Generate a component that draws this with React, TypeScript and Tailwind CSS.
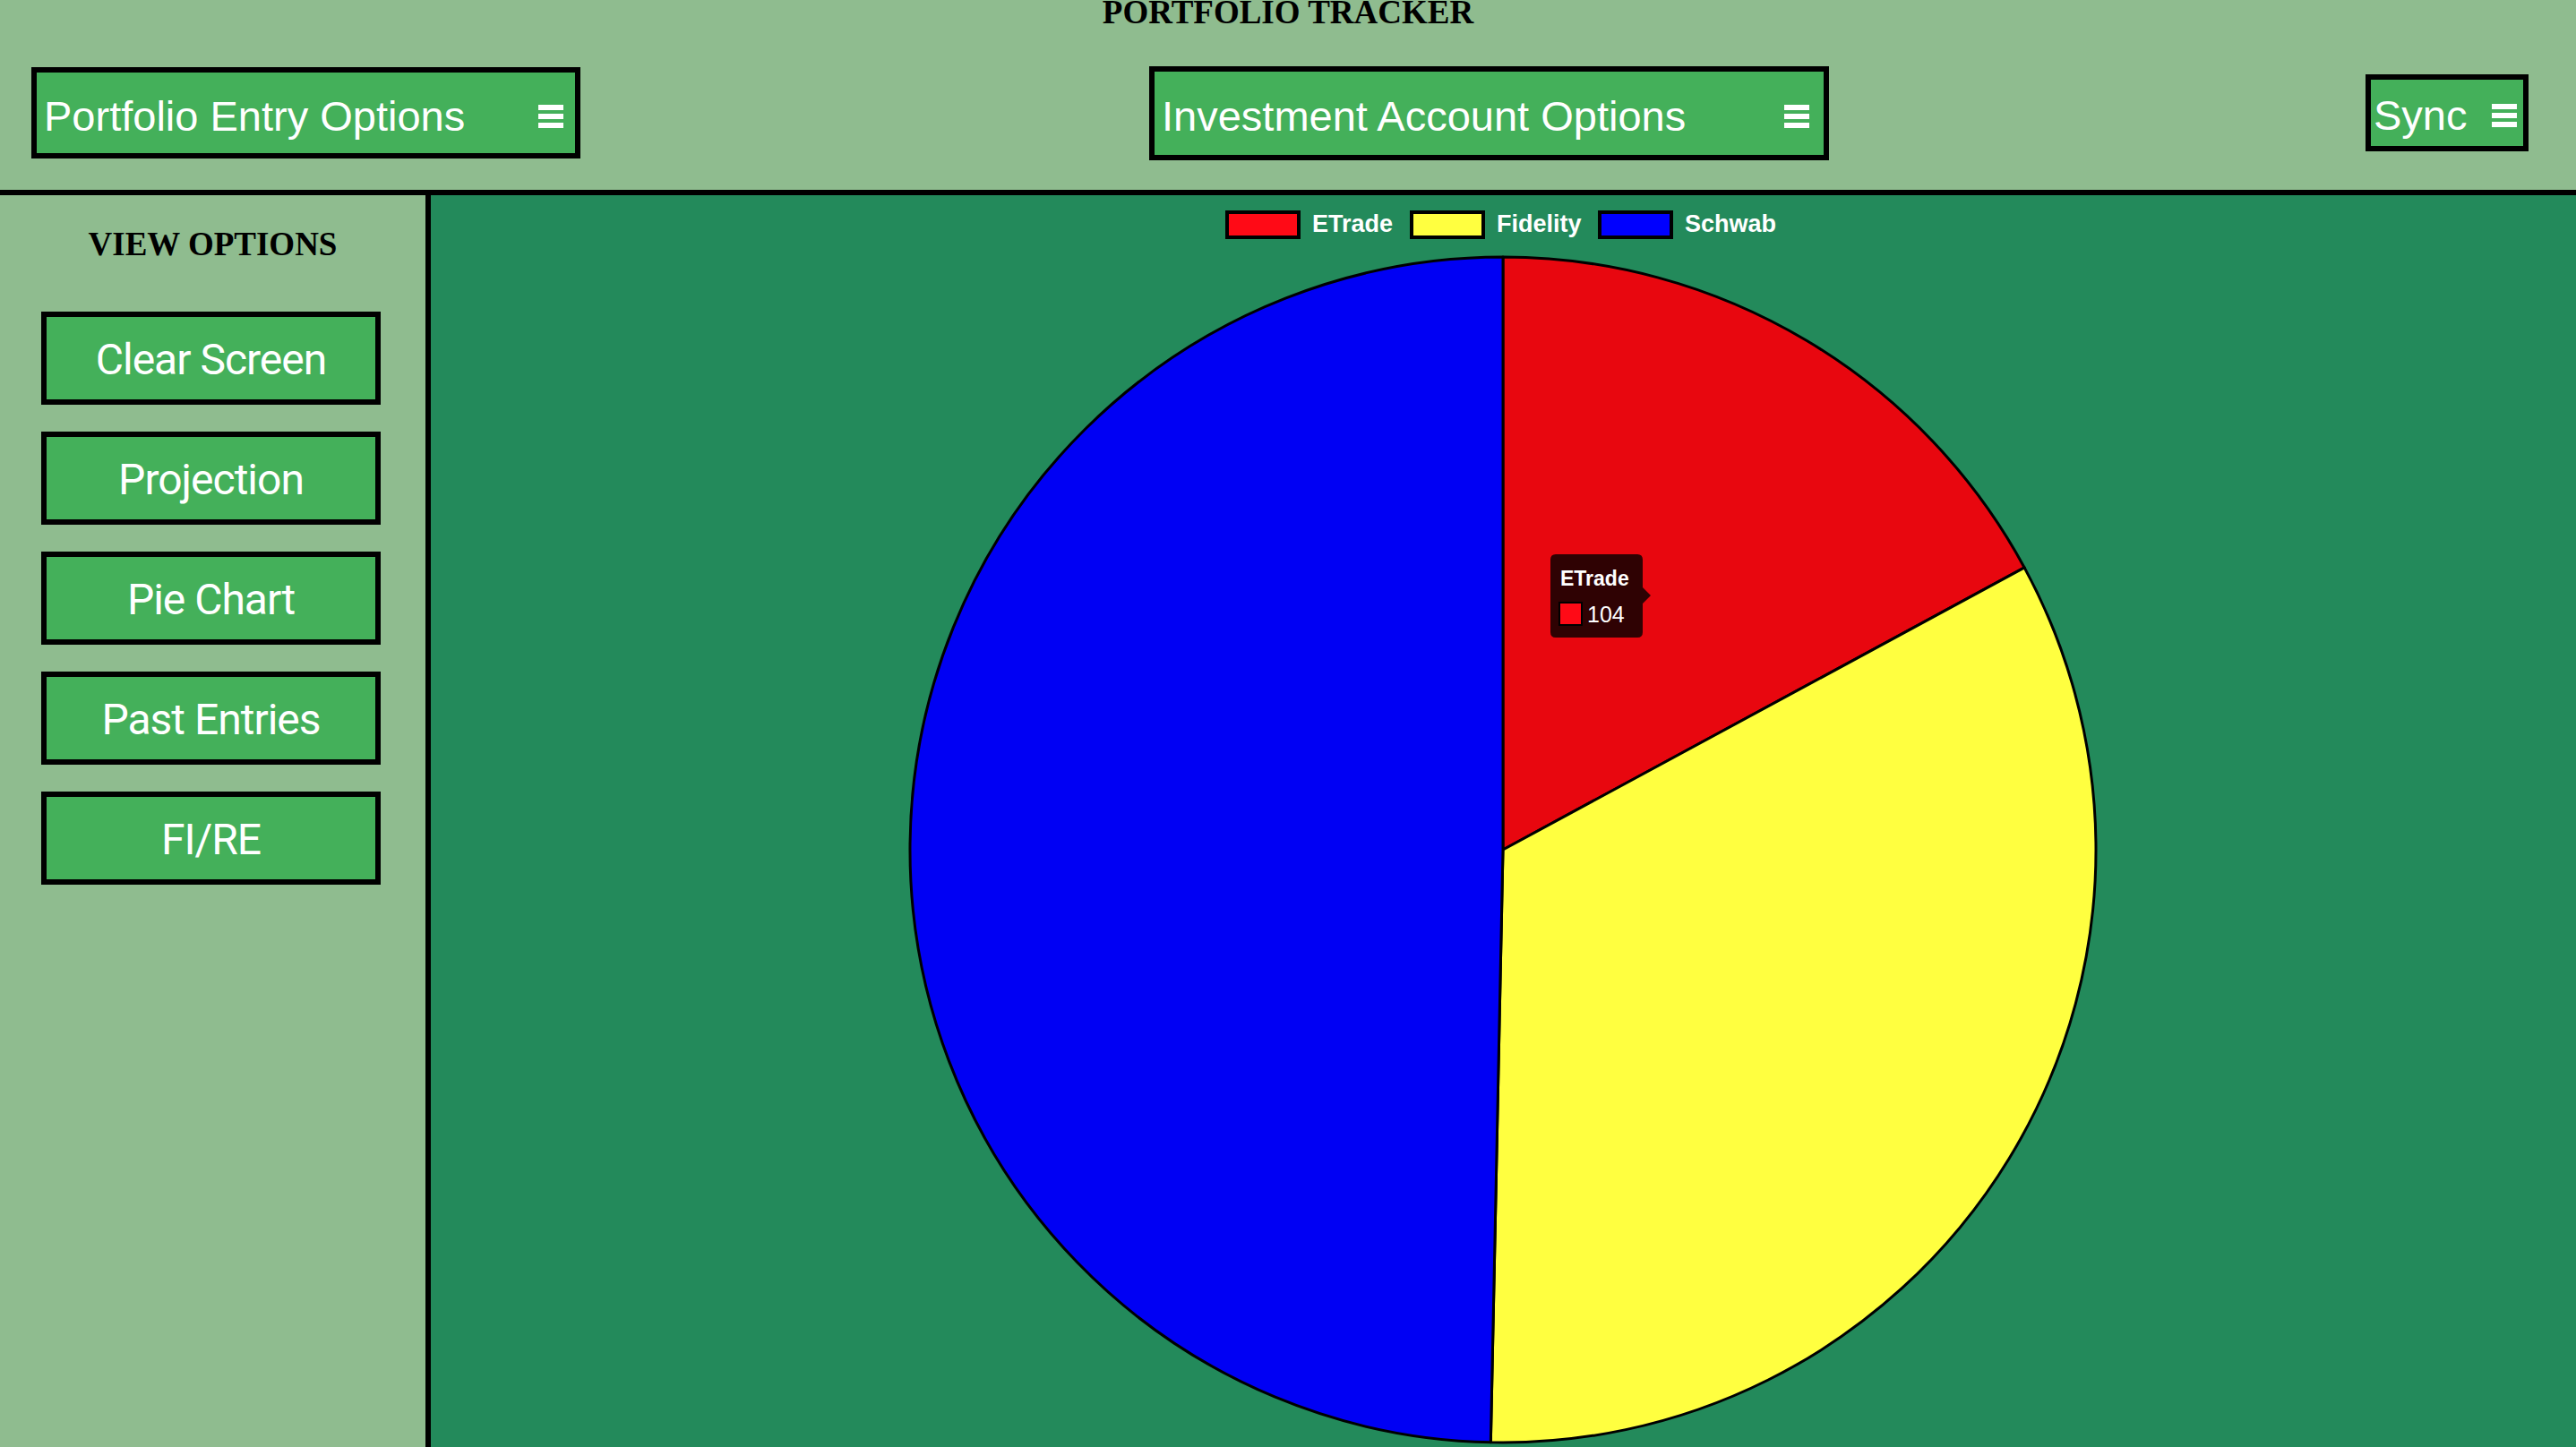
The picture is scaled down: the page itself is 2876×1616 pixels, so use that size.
import React from 'react';

const serif = { fontFamily: '"Liberation Serif", "Times New Roman", serif' };

type Slice = { label: string; value: number; fill: string; legend: string };

const slices: Slice[] = [
  { label: 'ETrade', value: 104, fill: '#e8070f', legend: '#ff0a16' },
  { label: 'Fidelity', value: 202, fill: '#ffff40', legend: '#ffff40' },
  { label: 'Schwab', value: 302, fill: '#0000f4', legend: '#0000ff' },
];

// pie geometry in page coordinates (svg viewBox starts at the main panel's corner)
const CX = 1678;
const CY = 949;
const R = 662;

function point(deg: number) {
  const a = (deg * Math.PI) / 180;
  return [CX + R * Math.cos(a), CY + R * Math.sin(a)];
}

function PieChart() {
  const total = slices.reduce((s, d) => s + d.value, 0);
  let start = -90;
  const arcs = slices.map((d) => {
    const sweep = (d.value / total) * 360;
    const end = start + sweep;
    const [x0, y0] = point(start);
    const [x1, y1] = point(end);
    const large = sweep > 180 ? 1 : 0;
    const path = `M ${CX} ${CY} L ${x0} ${y0} A ${R} ${R} 0 ${large} 1 ${x1} ${y1} Z`;
    start = end;
    return { ...d, path };
  });

  // legend box / label x positions
  const legend = [
    { box: 1368, text: 1465 },
    { box: 1574, text: 1671 },
    { box: 1784, text: 1881 },
  ];

  return (
    <svg
      className="block w-[2395px] h-[1398px]"
      viewBox="481 218 2395 1398"
      style={{ fontFamily: '"Liberation Sans", Arial, sans-serif' }}
    >
      {/* legend */}
      {slices.map((d, i) => (
        <g key={d.label}>
          <rect x={legend[i].box + 2} y={237} width={80} height={28} fill={d.legend} stroke="#000" strokeWidth={4} />
          <text x={legend[i].text} y={259} fill="#fff" fontSize={27} fontWeight="bold">
            {d.label}
          </text>
        </g>
      ))}

      {/* slices */}
      {arcs.map((a) => (
        <path key={a.label} d={a.path} fill={a.fill} stroke="#000" strokeWidth={3} strokeLinejoin="round" />
      ))}

      {/* tooltip */}
      <path
        d="M 1737 619 H 1828 Q 1834 619 1834 625 V 656 L 1843 665 L 1834 674 V 706 Q 1834 712 1828 712 H 1737 Q 1731 712 1731 706 V 625 Q 1731 619 1737 619 Z"
        fill="#2f0203"
      />
      <text x={1742} y={654} fill="#fff" fontSize={23} fontWeight="bold">
        ETrade
      </text>
      <rect x={1741} y={673} width={25} height={25} fill="#ff0a16" stroke="#000" strokeWidth={2} />
      <text x={1772} y={695} fill="#fff" fontSize={25}>
        104
      </text>
    </svg>
  );
}

function Bars() {
  return (
    <div className="flex flex-col gap-[4px] shrink-0 w-[28px]">
      <div className="h-[6px] bg-white"></div>
      <div className="h-[6px] bg-white"></div>
      <div className="h-[6px] bg-white"></div>
    </div>
  );
}

const sideItems = ['Clear Screen', 'Projection', 'Pie Chart', 'Past Entries', 'FI/RE'];

export default function App() {
  return (
    <div className="w-[2876px] h-[1616px] flex flex-col overflow-hidden bg-[#8fbc8f]">
      {/* Header */}
      <header className="h-[218px] shrink-0 border-b-[6px] border-black bg-[#8fbc8f] flex flex-col">
        <div
          className="h-[45px] -mt-[5px] shrink-0 text-center text-[37px] leading-[37px] font-bold text-black"
          style={serif}
        >
          PORTFOLIO TRACKER
        </div>

        <div
          className="h-[172px] shrink-0 flex items-center pl-[35px] pr-[53px] text-white text-[47px]"
          style={{ fontFamily: '"Liberation Sans", Arial, sans-serif' }}
        >
          <button className="w-[613px] h-[102px] border-[6px] border-black bg-[#44b05a] flex items-center justify-between pl-[8px] pr-[13px] pt-[8px]">
            <span className="whitespace-nowrap">Portfolio Entry Options</span>
            <Bars />
          </button>

          <button className="ml-[635px] w-[759px] h-[105px] border-[6px] border-black bg-[#44b05a] flex items-center justify-between pl-[8px] pr-[16px] pt-[8px]">
            <span className="whitespace-nowrap">Investment Account Options</span>
            <Bars />
          </button>

          <button className="ml-auto w-[182px] h-[86px] border-[6px] border-black bg-[#44b05a] flex items-center justify-between pl-[3px] pr-[7px] pt-[6px]">
            <span className="whitespace-nowrap">Sync</span>
            <Bars />
          </button>
        </div>
      </header>

      {/* Body */}
      <div className="flex-1 flex min-h-0">
        <aside className="w-[481px] shrink-0 border-r-[6px] border-black bg-[#8fbc8f] flex flex-col">
          <div className="pt-[36px] text-center text-[37px] leading-[37px] font-bold text-black" style={serif}>
            VIEW OPTIONS
          </div>
          <div
            className="mt-[57px] ml-[46px] w-[379px] flex flex-col gap-[30px]"
            style={{ fontFamily: 'Roboto, "Liberation Sans", sans-serif' }}
          >
            {sideItems.map((item) => (
              <button
                key={item}
                className="h-[104px] border-[6px] border-black bg-[#44b05a] text-white text-[48px] tracking-[-1px] pt-[3px] flex items-center justify-center"
              >
                {item}
              </button>
            ))}
          </div>
        </aside>

        <main className="flex-1 bg-[#238a5b] overflow-hidden">
          <PieChart />
        </main>
      </div>
    </div>
  );
}
